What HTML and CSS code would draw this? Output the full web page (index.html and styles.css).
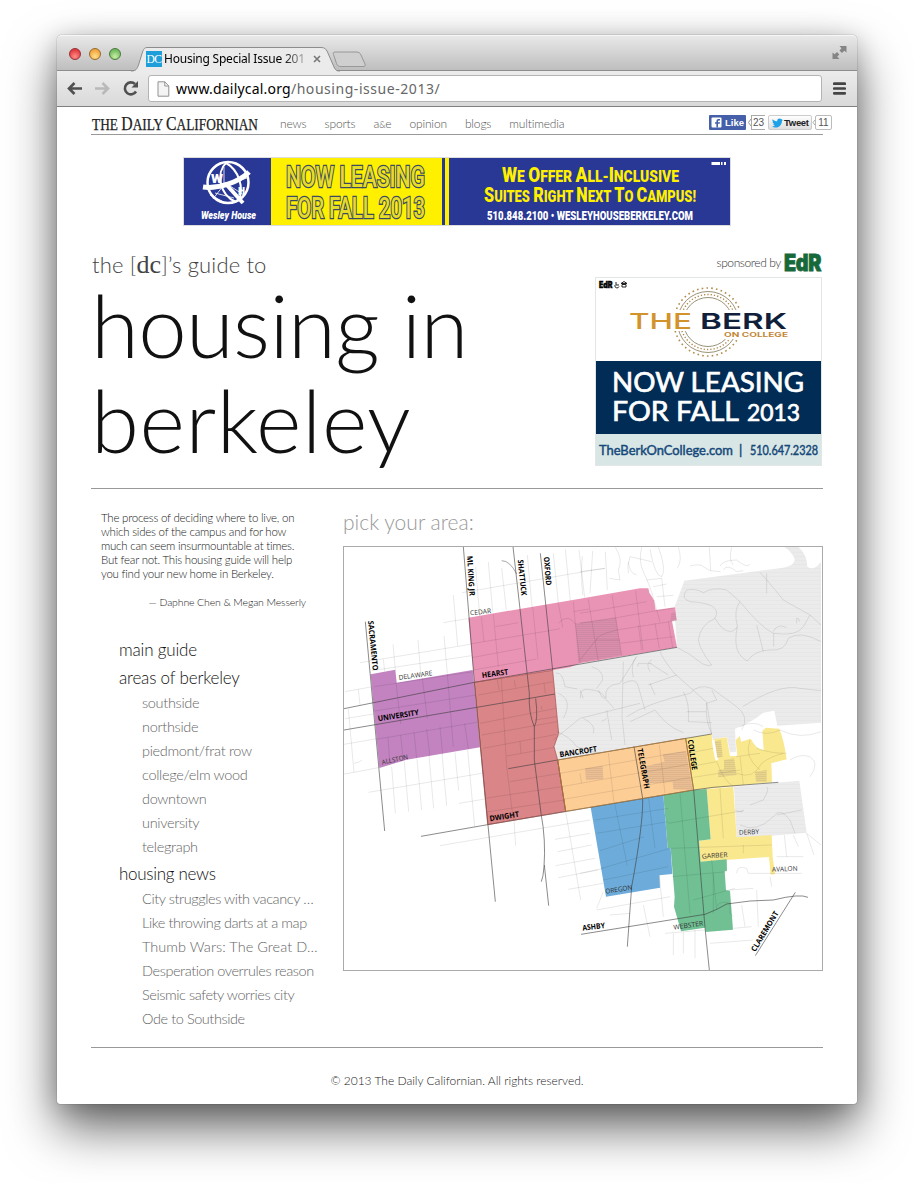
FILE: index.html
```html
<!DOCTYPE html>
<html lang="en">
<head>
<meta charset="utf-8">
<title>Housing Special Issue 2013</title>
<link rel="stylesheet" href="styles.css">
</head>
<body>
<div class="window">
  <div class="tabstrip">
    <div class="lights"><i class="light red"></i><i class="light amber"></i><i class="light green"></i></div>
    <div class="tab">
      <svg class="tab-shape" width="240" height="26" viewBox="0 0 240 26">
        <path d="M0 25.5C5 25 6 23 7.500 19L11.500 6C13 2 14 1.500 17 1.500H190C194 1.500 195 3 196.500 6L203 21C204.500 24.500 206 25.500 209 25.500V26H0Z" fill="#ebebeb"/>
        <path d="M0 25C5 25 6 23 7.500 19L11.500 6C13 2 14 1.500 17 1.500H190C194 1.500 195 3 196.500 6L203 21C204.500 24.500 206 25 209 25" fill="none" stroke="#8d8d8d"/>
        <path d="M204 6H225C228 6 229 7 230 9L234 18C234.500 20 234 20.500 232 20.500H210C207.500 20.500 206.500 20 205.500 17.500L202.500 8.500C202 7 202.300 6 204 6Z" fill="#cfcfcf" stroke="#989898"/>
      </svg>
      <span class="favicon">DC</span>
      <span class="tab-title">Housing Special Issue 201</span>
      <svg class="tab-close" width="8" height="8" viewBox="0 0 8 8"><path d="M1 1L7 7M7 1L1 7" stroke="#777" stroke-width="1.600"/></svg>
    </div>
    <svg class="expand" width="15" height="15" viewBox="0 0 15 15" fill="#858585"><path d="M7.500 1H14.500V7.500L12.300 5.800L10 8L7.500 5.500L9.500 3.200ZM.5 7.500L2.700 9.200L5 7L7.300 9.500L5.200 11.800L7.500 14H.5Z"/></svg>
  </div>
  <div class="toolbar">
    <svg width="80" height="18" viewBox="0 0 80 18" fill="none" stroke-width="2.600">
      <path d="M17 8.500H4M9.500 3L4 8.500L9.500 14" stroke="#505050"/>
      <path d="M30 8.500H43M37.500 3L43 8.500L37.500 14" stroke="#b9b9b9"/>
      <path d="M71 11.500A6 6 0 1 1 70 4" stroke="#505050"/><path d="M73 1V7.500H66.500Z" fill="#505050"/>
    </svg>
    <div class="omnibox">
      <svg width="13" height="16" viewBox="0 0 13 16"><path d="M1 .8H7.800L11.800 5V15.200H1ZM7.800 .8V5H11.800" fill="#f4f4f4" stroke="#929292"/></svg>
      <span class="url"><b>www.dailycal.org</b>/housing-issue-2013/</span>
    </div>
    <svg class="menu-icon" width="13" height="13" viewBox="0 0 13 13"><path d="M1.200 1.700H11.800M1.200 6.500H11.800M1.200 11.300H11.800" stroke="#444" stroke-width="2.700" stroke-linecap="round"/></svg>
  </div>

  <div class="page">
    <header class="site-header">
      <svg class="logo" width="168" height="20" viewBox="0 0 168 20"><text x="1" y="16.500" textLength="166" lengthAdjust="spacingAndGlyphs" font-family="Liberation Serif, serif" font-size="16.500" fill="#222" stroke="#222" stroke-width=".25">THE <tspan font-size="19.500">D</tspan>AILY <tspan font-size="19.500">C</tspan>ALIFORNIAN</text></svg>
      <nav class="nav"><a>news</a><a>sports</a><a>a<small>&amp;</small>e</a><a>opinion</a><a>blogs</a><a>multimedia</a></nav>
      <div class="social">
        <span class="like"><svg width="11" height="11" viewBox="0 0 11 11"><rect x=".5" y=".5" width="10" height="10" rx="1" fill="#fff"/><path d="M7 10.500V6.800H8.700L9 5.200H7V4.300Q7 3.500 7.900 3.500H9V2H7.400Q5.400 2 5.400 4V5.200H4V6.800H5.400V10.500Z" fill="#4560a8"/></svg>Like</span>
        <svg width="5" height="15" viewBox="0 0 5 15"><path d="M5 4L2.500 7.500L5 11" fill="none" stroke="#999"/></svg>
        <span class="count fb">23</span>
        <span class="tweet"><svg width="11" height="10" viewBox="0 0 11 10"><path d="M.6 1.200C2 2.700 3.500 3.200 5.200 3.200C5 1.300 6.200.5 7.400.5C8.300.5 8.800.9 9.200 1.300L10.500.9L9.800 2L10.900 1.900L9.900 3C9.900 7 7 9.500 4 9.500C2.500 9.500 1.200 9.200.2 8.400C1.500 8.400 2.400 8.200 3.200 7.500C2 7.300 1.500 6.700 1.200 5.900H2.100C1 5.400.5 4.600.5 3.600L1.400 3.900C.4 3.100.2 2.200.6 1.200Z" fill="#1da1e8"/></svg>Tweet</span>
        <svg width="3" height="15" viewBox="0 0 3 15"><path d="M3 5L1 7.500L3 10" fill="none" stroke="#aaa"/></svg>
        <span class="count tw">11</span>
      </div>
    </header>

    <svg class="banner" width="548" height="69" viewBox="-1 -1 548 69" font-family="Roboto, sans-serif">
      <rect x="-.5" y="-.5" width="547" height="68" fill="#293795" stroke="#ddd"/>
      <rect x="87" width="178" height="67" fill="#fff000"/>
      <rect x="258" width="3" height="67" fill="#293795"/>
      <g fill="none" stroke="#fff">
        <circle cx="44" cy="24.500" r="20.500" stroke-width="2.500"/>
        <path d="M42 5C32 14 35 37 52 44M42 5C55 12 60 30 55 42" stroke-width="2"/>
        <path d="M26 37L38 43M29 41L42 24M46 28L60 37M45 26L63 20M31 35L50 40M40 9V28" stroke-width=".8"/>
        <path d="M19 29C33 31 54 25 65 14" stroke-width="5"/>
        <path d="M41 25L59 45" stroke-width="4"/>
      </g>
      <text x="27" y="25" fill="#fff" font-weight="900" font-size="13" textLength="12" lengthAdjust="spacingAndGlyphs">W</text>
      <text x="54" y="37" fill="#fff" font-weight="900" font-size="11" textLength="7" lengthAdjust="spacingAndGlyphs">H</text>
      <text x="17" y="61" fill="#fff" font-weight="900" font-style="italic" font-size="11" textLength="55" lengthAdjust="spacingAndGlyphs">Wesley House</text>
      <g font-weight="500" fill="#e6dc28" stroke="#3a4a62" stroke-width="2.600" paint-order="stroke">
        <text x="102" y="28.500" font-size="29.500" textLength="139" lengthAdjust="spacingAndGlyphs">NOW LEASING</text>
        <text x="102" y="59.500" font-size="29.500" textLength="139" lengthAdjust="spacingAndGlyphs">FOR FALL 2013</text>
      </g>
      <g font-weight="900" fill="#fff000">
        <text x="318" y="23.500" font-size="16" textLength="177" lengthAdjust="spacingAndGlyphs"><tspan font-size="20">W</tspan>E <tspan font-size="20">O</tspan>FFER <tspan font-size="20">A</tspan>LL-<tspan font-size="20">I</tspan>NCLUSIVE</text>
        <text x="300" y="44" font-size="16" textLength="212" lengthAdjust="spacingAndGlyphs"><tspan font-size="20">S</tspan>UITES <tspan font-size="20">R</tspan>IGHT <tspan font-size="20">N</tspan>EXT <tspan font-size="20">T</tspan>O <tspan font-size="20">C</tspan>AMPUS!</text>
      </g>
      <text x="303" y="61.500" fill="#fff" font-weight="900" font-size="13.500" textLength="206" lengthAdjust="spacingAndGlyphs">510.848.2100 • WESLEYHOUSEBERKELEY.COM</text>
      <path d="M527.500 5.500H536M537 5.500H538.500M540 5.500H542" stroke="#fff" stroke-width="3"/>
    </svg>

    <section class="hero">
      <div>
        <div class="kicker">the [<span class="dc">dc</span>]’s guide to</div>
        <h1><span class="line-1">housing in</span><br><span class="line-2">berkeley</span></h1>
      </div>
      <aside>
        <div class="sponsor"><span>sponsored by</span>
          <svg width="38" height="19" viewBox="0 0 38 19"><text x="0" y="17.500" font-family="Inter, sans-serif" font-weight="900" font-size="23" textLength="37" lengthAdjust="spacingAndGlyphs" fill="#17693a" stroke="#17693a" stroke-width=".8">EdR</text></svg>
        </div>
        <svg class="berk" width="227" height="189" viewBox="0 0 227 189" font-family="Lato, sans-serif">
          <rect x=".5" y=".5" width="226" height="188" fill="#fff" stroke="#e2e6e6"/>
          <rect x="1" y="84" width="225" height="73" fill="#002c55"/>
          <rect x="1" y="157" width="225" height="31" fill="#d8e7e5"/>
          <g fill="none" stroke="#b08b4d">
            <circle cx="113" cy="45" r="34" stroke-width="1.600" stroke-dasharray="1.600 3.200"/>
            <circle cx="113" cy="45" r="30.500" stroke="#9a9278" stroke-width="1"/>
            <circle cx="113" cy="45" r="27.500" stroke-width="1.400" stroke-dasharray="1.300 2"/>
            <circle cx="113" cy="45" r="24.500" stroke="#9a9278" stroke-width="1"/>
          </g>
          <path d="M34 33H193V54H200V62H128V54H34Z" fill="#fff"/>
          <text x="34" y="51.500" font-family="Inter, sans-serif" font-weight="500" font-size="22" textLength="63" lengthAdjust="spacingAndGlyphs" fill="#d2932d">THE</text>
          <text x="105" y="51.500" font-family="Inter, sans-serif" font-weight="600" font-size="22" textLength="87" lengthAdjust="spacingAndGlyphs" fill="#10203b">BERK</text>
          <text x="129" y="60" font-family="Inter, sans-serif" font-weight="700" font-size="6.200" textLength="64" lengthAdjust="spacingAndGlyphs" fill="#c28838">ON COLLEGE</text>
          <text x="4" y="10.500" font-family="Inter, sans-serif" font-weight="900" font-size="8.500" textLength="13.500" lengthAdjust="spacingAndGlyphs" stroke="#000" stroke-width=".5">EdR</text>
          <path d="M21 5V8H24M20 8A2 2 0 1 0 24 9.500M26 6.500L29 4.500L32 6.500ZM27 7.500V10H31V7.500Z" fill="none" stroke="#222"/>
          <g fill="#fff" font-weight="400" stroke="#fff" stroke-width=".7" font-size="27">
            <text x="17" y="115" textLength="192" lengthAdjust="spacingAndGlyphs">NOW LEASING</text>
            <text x="17" y="144" textLength="127" lengthAdjust="spacingAndGlyphs">FOR FALL</text>
            <text x="152" y="144" font-size="23" textLength="53" lengthAdjust="spacingAndGlyphs">2013</text>
          </g>
          <g fill="#16477a" font-weight="400" stroke="#16477a" stroke-width=".45" font-size="13">
            <text x="4" y="178" textLength="134" lengthAdjust="spacingAndGlyphs">TheBerkOnCollege.com</text>
            <text x="144" y="178">|</text>
            <text x="155" y="178" textLength="68" lengthAdjust="spacingAndGlyphs">510.647.2328</text>
          </g>
        </svg>
      </aside>
    </section>

    <main class="main">
      <div class="side">
        <p class="intro">The process of deciding where to live, on<br>which sides of the campus and for how<br>much can seem insurmountable at times.<br>But fear not. This housing guide will help<br>you find your new home in Berkeley.</p>
        <p class="byline">— Daphne Chen &amp; Megan Messerly</p>
        <ul class="menu">
          <li>main guide</li>
          <li>areas of berkeley
            <ul><li>southside</li><li>northside</li><li>piedmont/frat row</li><li>college/elm wood</li><li>downtown</li><li>university</li><li>telegraph</li></ul></li>
          <li class="section-news">housing news
            <ul class="news"><li>City struggles with vacancy …</li><li>Like throwing darts at a map</li><li class="loose">Thumb Wars: The Great D…</li><li>Desperation overrules reason</li><li>Seismic safety worries city</li><li>Ode to Southside</li></ul></li>
        </ul>
      </div>
      <div class="picker">
        <h2>pick your area:</h2>
        <svg class="map" width="480" height="425" viewBox="9 18 1440 1275" font-family="Open Sans, Noto Sans, sans-serif">
          <defs>
            <pattern id="hatch" width="8" height="12" patternUnits="userSpaceOnUse"><rect width="8" height="12" fill="#ebebeb"/><rect width="8" height="3" fill="#e7e7e7"/></pattern>
            <pattern id="lines" width="8" height="6" patternUnits="userSpaceOnUse"><rect width="8" height="6" fill="#8a7080" opacity=".16"/><rect width="8" height="2" fill="#604a55" opacity=".12"/></pattern>
          </defs>
          <rect x="9" y="18" width="1440" height="1275" fill="#fff"/>
          <!-- campus and hills -->
          <path fill="url(#hatch)" d="M638 391L690 382L720 370L1011 322L1003 203L1033 122L1330 83Q1360 78 1364 60Q1360 38 1332 20H1375Q1402 45 1402 80Q1420 95 1443 66V548L1312 557L1303 512L1270 518Q1230 550 1185 566L1188 635L1170 637L1160 590L1118 600L1115 582L1037 595L653 660L642 620L656 580Z"/>
          <path fill="url(#hatch)" d="M1182 740L1378 722L1400 878L1295 887L1190 892Z"/>
          <!-- neighbourhoods -->
          <path fill="#c283c0" d="M92 403L166 389L170 428L398 390L420 622L200 659L118 684Z"/>
          <path fill="#ea94b5" d="M385 233L720 176L900 145H925L928 158L942 180L947 210L1005 202L1010 240L996 243L1011 322L720 370L690 382L638 391L403 427Z"/>
          <path fill="#da8588" d="M403 427L638 391L656 580L642 620L653 660L677 814L443 854Z"/>
          <path fill="#fdcd96" d="M653 660L1037 595L1061 750L677 814Z"/>
          <path fill="#fae88e" d="M1037 595L1115 582Q1118 640 1128 663L1136 657Q1130 655 1120 598L1160 592L1170 648L1192 648L1187 600L1200 588L1203 605L1232 596Q1248 628 1271 630L1267 572L1278 563L1318 566Q1332 600 1340 658L1294 670L1296 727L1061 750Z"/>
          <path fill="#fae88e" d="M1100 747L1180 741L1190 892L1295 885L1298 950L1305 1002L1292 1004L1287 951L1082 965L1077 902L1112 898Z"/>
          <path fill="#70c094" d="M970 765L1061 750L1100 747L1112 898L1077 902L1082 965L1160 958L1161 992L1154 994L1158 1051L1170 1052L1179 1169L1097 1176L1095 1163L1023 1174L1002 1100L1004 1070L992 925L983 924Z"/>
          <path fill="#6dacda" d="M752 802L970 765L983 924L992 925L997 1002L958 1006L960 1043L798 1070Z"/>
          <!-- shaded blocks -->
          <path fill="url(#lines)" d="M705 250L828 233L845 346L715 368ZM990 247L1010 243 1006 217 994 219ZM735 685L788 678L790 717L738 721ZM968 643L1038 634L1058 750L1000 748L998 726L916 730L912 680L974 665ZM1120 604L1143 601L1148 650L1126 655ZM1135 690L1152 688V660L1182 655L1190 705L1135 712ZM1245 695L1280 690V725H1248Z"/>
          <!-- minor streets -->
          <g fill="none" stroke="#000" stroke-opacity=".14" stroke-width="2">
            <path d="M310 248L382 236M340 165L353 318M366 158L750 92L795 85M407 80L419 228M445 66L458 215M485 84L499 210M562 45L576 200M640 40L655 190M676 28L691 183M717 30L734 173M60 368L390 313M130 358L134 394M159 313L166 389M234 300L243 414M312 288L322 400M95 392L395 347"/>
            <path d="M15 455L92 441M55 448L60 495M15 536L100 522M12 613L110 596M25 507L42 697L12 702M42 697L115 683M42 670Q60 668 66 660M85 757L425 700M155 680L166 820M193 665L206 815M231 657L245 810M267 648L281 805M306 642L320 797M345 637L356 752M383 630L404 860M357 790L435 777M300 917L750 840M522 842L527 917"/>
            <path d="M102 440L400 395M104 513L408 465M108 598L415 546M168 428L182 552M247 415L262 535M322 402L340 620M144 592L150 674M182 585L190 662M222 577L230 655M260 567L270 650M300 560L308 644M374 550L385 628"/>
            <path d="M390 312L640 270L660 266M466 260L535 248M395 353L545 325M400 390L590 357M424 230L432 305M460 222L475 380M578 200L594 358M655 190L668 262M700 185L706 250L720 370M656 250Q665 235 685 235Q700 240 705 252M700 215L748 207"/>
            <path d="M415 465L640 425M420 550L648 505M425 585L652 545M430 625L650 583M435 775L665 740M440 816L672 780M472 420L478 450M484 415L500 680L520 840M523 420L526 442M612 430L616 460M585 540L650 530M540 604L543 640M500 648L645 622M510 725L660 700M604 498L606 510"/>
            <path d="M745 178L775 365M816 165L845 346M887 153L909 330M942 180L950 210M720 250L830 233L950 212L1000 205M830 270L990 245M840 310L1000 290M720 220L920 185M950 210L960 245M895 255L905 330M945 250L958 325M985 245L998 322M720 360L768 300M768 300L840 300M768 300Q770 285 830 270"/>
            <path d="M727 48Q722 100 728 165M758 33L750 160M796 35L802 150M720 95L795 85M826 22Q850 60 835 90L840 120L808 115M865 65Q868 100 890 105M935 65L870 50Q860 75 865 100M905 22Q895 65 910 95Q935 150 940 175M930 28Q945 110 965 110Q980 90 955 20M1015 22Q1028 60 1012 85M920 120L965 115L975 200M940 140L980 132M950 170L1000 166M1050 78Q1080 70 1090 80L1110 92L1142 95M1108 22L1112 92M1175 22Q1165 60 1180 75M1140 78Q1150 60 1190 60Q1220 85 1230 73M1150 90Q1160 70 1190 95L1210 92"/>
            <path d="M1050 185Q1020 175 1040 150Q1070 145 1090 158Q1120 140 1160 150L1200 185Q1260 260 1300 280Q1370 290 1390 260L1410 225M1200 185Q1180 210 1192 260Q1180 280 1160 272Q1145 268 1125 235Q1080 255 1075 300Q1080 330 1115 375Q1105 380 1085 370Q1050 340 1011 322M1050 185Q1150 190 1125 235M1192 260Q1175 340 1222 363Q1245 330 1290 330Q1335 335 1345 295Q1380 270 1443 305M1250 255L1270 335M1260 97Q1290 130 1330 180L1410 225L1443 255M1280 100V160M1301 280V320M1300 275Q1310 250 1340 262M1370 250V235Q1380 235 1378 245M1208 500Q1320 430 1380 445L1443 452"/>
            <path d="M648 400Q668 395 675 440L712 447M720 450L730 475M722 475Q715 440 755 450Q780 450 798 475Q790 435 840 430L890 350M755 380Q790 390 788 420L770 445M775 450L785 470Q795 475 800 480L822 505M850 365L846 530L855 615M890 350Q870 370 880 412M850 430Q890 410 895 440L915 510M893 380L895 370H935M935 360Q915 370 930 395M930 370L985 405M925 435L1010 405M930 430L945 465M960 335Q970 360 1003 400L1100 487L1115 582M860 530Q920 490 1050 460Q1075 430 1115 445L1190 500Q1230 530 1205 570M870 545L945 510Q980 560 1030 578M800 510L815 600M720 535L900 490M1030 455Q1050 490 1045 545L1115 548M1040 515H1098M650 575Q690 590 710 620L775 640M655 460Q700 480 670 535M730 535Q770 555 760 580M785 545L800 535M640 600L720 535M1115 582Q1095 540 1100 490L1130 480L1115 450"/>
            <path d="M660 700L1048 632M665 740L1050 672M670 778L1055 712M720 700L725 730M805 638L822 790M958 615L975 760M1040 640L1120 625M1050 680L1130 665M1060 712L1200 690M1130 665Q1150 720 1180 740M1200 650L1210 735M1188 650L1260 640M1190 700Q1240 720 1265 670Q1290 650 1330 640M1230 600Q1210 650 1260 690M1250 625Q1290 640 1340 640M1200 560Q1240 540 1270 560M1240 570Q1280 590 1320 570Q1380 600 1443 575M1350 660Q1380 640 1410 650Q1440 670 1410 710"/>
            <path d="M765 840L985 805M770 880L985 845M780 932L912 890M785 985L990 925M790 1020L985 980M824 790L862 977M925 770L945 925M645 898L750 880M653 935L755 915M647 977L765 955M655 1013L775 990M685 1048L790 1030M677 814L722 1080M720 1000L790 985M1020 760L1050 1120M1140 745L1150 895M985 850L1210 812M992 925L1295 915M1060 1080L1185 1045M1120 1000V1120M995 1010L1160 995M1115 960L1130 1110M1130 1100Q1140 1080 1170 1090V1120L1180 1130M1210 915V940"/>
            <path d="M790 1055L770 1105M770 1110L990 1070M810 1125L870 1120M910 1095L930 1190M958 1006L970 1130M975 1180L1095 1170M1000 1180V1245M1030 1175V1240M1065 1170V1255M1110 1210L1240 1200M1180 1165L1235 1160M1205 1095L1215 1160M1250 1050L1255 1160M1170 1050L1240 1045M1190 1000Q1190 975 1220 985L1225 1000H1385M1310 950L1390 950M1290 1010L1295 1040M1333 885L1340 950M1360 885L1375 920M1400 880L1422 945M1400 880L1443 915M1185 810Q1205 820 1212 810M1230 795L1270 780Q1290 745 1280 740M1200 855Q1250 880 1300 830Q1320 800 1350 840L1365 880M1310 825L1385 810"/>
          </g>
          <!-- major streets -->
          <g fill="none" stroke="#3d3d3d" stroke-width="2.400" stroke-opacity=".75">
            <path d="M76 245L134 873M370 20L403 427L466 1085M519 20L540 207L568 460Q565 520 583 560V660L603 820Q618 900 612 980Q610 1010 604 1025M613 975L626 1097M601 40L638 391M403 427L1011 322M12 506L403 427M12 570L645 462M243 889L443 854L1061 750L1120 742L1315 727M587 475Q595 540 583 560M505 686L653 660L1115 582M653 660L677 814M882 620L908 775Q910 850 875 1040L862 1220M1037 595L1061 750L1095 1163L1108 1290M723 1183L1095 1123Q1130 1110 1160 1092Q1230 1080 1300 1080Q1380 1060 1404 1072M1366 1057L1246 1247"/>
            <path d="M485 62Q510 62 530 102" stroke-width="1.800"/>
          </g>
          <path d="M403 427L638 391L656 580L642 620L653 660L677 814L443 854Z" fill="none" stroke="#a04d45" stroke-width="2"/>
          <path d="M653 660L1037 595L1061 750L677 814Z" fill="none" stroke="#b5782f" stroke-width="2"/>
          <path d="M1120 600Q1128 640 1128 658" fill="none" stroke="#fff" stroke-width="6"/>
          <!-- street names -->
          <g font-weight="700" font-size="23" fill="#000">
            <text transform="translate(84 243) rotate(84.500)" textLength="150" lengthAdjust="spacingAndGlyphs">SACRAMENTO</text>
            <text transform="translate(381 48) rotate(86.500)" textLength="120" lengthAdjust="spacingAndGlyphs">ML KING JR</text>
            <text transform="translate(533 60) rotate(84)" textLength="108" lengthAdjust="spacingAndGlyphs">SHATTUCK</text>
            <text transform="translate(611 51) rotate(85)" textLength="86" lengthAdjust="spacingAndGlyphs">OXFORD</text>
            <text transform="translate(427 414) rotate(-8)" textLength="79" lengthAdjust="spacingAndGlyphs">HEARST</text>
            <text transform="translate(115 544) rotate(-9)" textLength="124" lengthAdjust="spacingAndGlyphs">UNIVERSITY</text>
            <text transform="translate(660 652) rotate(-9)" textLength="113" lengthAdjust="spacingAndGlyphs">BANCROFT</text>
            <text transform="translate(450 844) rotate(-9)" textLength="89" lengthAdjust="spacingAndGlyphs">DWIGHT</text>
            <text transform="translate(892 627) rotate(80)" textLength="122" lengthAdjust="spacingAndGlyphs">TELEGRAPH</text>
            <text transform="translate(1043 600) rotate(82)" textLength="92" lengthAdjust="spacingAndGlyphs">COLLEGE</text>
            <text transform="translate(728 1172) rotate(-7)" textLength="68" lengthAdjust="spacingAndGlyphs">ASHBY</text>
            <text transform="translate(1246 1237) rotate(-59)" textLength="137" lengthAdjust="spacingAndGlyphs">CLAREMONT</text>
          </g>
          <g font-size="20" font-weight="400" fill="#333">
            <text transform="translate(391 226) rotate(-6)" textLength="63" lengthAdjust="spacingAndGlyphs">CEDAR</text>
            <text transform="translate(177 420) rotate(-8)" textLength="102" lengthAdjust="spacingAndGlyphs">DELAWARE</text>
            <text transform="translate(127 674) rotate(-12)" textLength="80" lengthAdjust="spacingAndGlyphs">ALLSTON</text>
            <text transform="translate(797 1061) rotate(-9)" textLength="82" lengthAdjust="spacingAndGlyphs">OREGON</text>
            <text transform="translate(1001 1169) rotate(-8)" textLength="90" lengthAdjust="spacingAndGlyphs">WEBSTER</text>
            <text transform="translate(1086 956) rotate(-4)" textLength="77" lengthAdjust="spacingAndGlyphs">GARBER</text>
            <text transform="translate(1197 884) rotate(-2)" textLength="60" lengthAdjust="spacingAndGlyphs">DERBY</text>
            <text transform="translate(1296 995) rotate(-2)" textLength="77" lengthAdjust="spacingAndGlyphs">AVALON</text>
          </g>
          <rect x="10.500" y="19.500" width="1437" height="1272" fill="none" stroke="#aaa" stroke-width="3"/>
        </svg>
      </div>
    </main>
    <footer>© 2013 The Daily Californian. All rights reserved.</footer>
  </div>
</div>
</body>
</html>
```
FILE: styles.css
```css
* { box-sizing: border-box; }
body { margin: 0; height: 1183px; overflow: hidden; background: #fff; font-family: Lato, "Liberation Sans", sans-serif; font-weight: 300; }
ul, h1, h2, p { margin: 0; padding: 0; list-style: none; font-weight: 300; }
svg { display: block; flex: none; }

.window { width: 800px; height: 1069px; margin: 35px 0 0 57px; background: #fff; border-radius: 5px 5px 3px 3px; box-shadow: 0 0 1px rgba(0,0,0,.7), 0 24px 50px rgba(0,0,0,.6), 0 4px 24px rgba(0,0,0,.2); }

/* browser chrome */
.tabstrip { display: flex; height: 36px; padding: 0 10px 0 12px; border-radius: 5px 5px 0 0; background: linear-gradient(#e8e8e8, #bebebe); border-top: 1px solid #f6f6f6; border-bottom: 1px solid #8d8d8d; }
.lights { display: flex; gap: 8px; padding-top: 12px; width: 62px; }
.light { width: 12px; height: 12px; border-radius: 50%; border: 1px solid #777; }
.red { background: radial-gradient(circle at 50% 75%, #ff8f88, #e1373c 75%); border-color: #983035; }
.amber { background: radial-gradient(circle at 50% 75%, #ffe08a, #f0a23c 75%); border-color: #98692a; }
.green { background: radial-gradient(circle at 50% 75%, #c7f0a4, #6fb75c 75%); border-color: #4a7a3d; }
.tab { position: relative; display: flex; align-items: center; width: 240px; height: 26px; margin-top: 10px; padding-left: 15px; }
.tab-shape { position: absolute; left: 0; top: 0; }
.favicon { position: relative; width: 16px; height: 16px; background: #1f9fd9; color: #fff; font: 11.5px/16px "Liberation Serif", serif; text-align: center; letter-spacing: -.5px; }
.tab-title { position: relative; width: 144px; margin-left: 2px; white-space: nowrap; font: 400 12px/16px "Noto Sans", sans-serif; letter-spacing: -.22px; color: transparent; background: linear-gradient(90deg, #000 82%, rgba(0,0,0,.15)); -webkit-background-clip: text; background-clip: text; }
.tab-close { position: relative; margin-left: 5px; }
.expand { margin: 9px 0 0 auto; }
.toolbar { display: flex; align-items: center; height: 36px; padding: 0 11px 0 8px; background: linear-gradient(#ececec, #d9d9d9); border-bottom: 1px solid #808080; }
.omnibox { display: flex; align-items: center; width: 674px; height: 27px; margin-left: 3px; padding-left: 8px; background: #fff; border: 1px solid #b4b4b4; border-radius: 3px; }
.url { margin-left: 6px; font: 400 14px/24px "Noto Sans", sans-serif; color: #666; letter-spacing: .55px; }
.url b { font-weight: 400; color: #000; letter-spacing: .2px; }
.menu-icon { margin-left: auto; }

/* page */
.page { padding: 0 34px; }
.site-header { display: flex; height: 28px; border-bottom: 1px solid #999; }
.logo { margin-top: 6px; }
.nav { display: flex; gap: 18px; margin-left: 21px; padding-top: 6px; font-size: 12px; line-height: 22px; color: #555; letter-spacing: -.15px; }
.nav small { font-size: 9px; }
.social { display: flex; align-items: center; height: 15px; margin: 8px -9px 0 auto; font-family: "Liberation Sans", sans-serif; font-weight: 400; font-size: 10px; }
.like { display: flex; align-items: center; gap: 3px; width: 37px; height: 15px; padding-left: 2px; background: #4560a8; color: #fff; font-weight: 700; font-size: 9.5px; border-radius: 1px; }
.count { height: 15px; line-height: 13px; border: 1px solid #aaa; color: #555; text-align: center; }
.fb { width: 14px; border-right: 0; }
.tweet { display: flex; align-items: center; gap: 1px; width: 44px; height: 15px; margin-left: 3px; padding-left: 3px; border: 1px solid #ccc; border-radius: 2px; background: linear-gradient(#fff, #dedede); color: #222; font-weight: 700; font-size: 9.5px; letter-spacing: -.3px; }
.tw { width: 17px; border-color: #bbb; border-radius: 2px; }
.banner { margin: 22px auto -1px; }

.hero { display: flex; justify-content: space-between; height: 264px; padding-right: 1px; border-bottom: 1px solid #999; }
.kicker { padding: 26px 0 0 1px; font-size: 22px; line-height: 28px; color: #444; letter-spacing: .15px; }
.dc { font-family: "Liberation Serif", serif; font-weight: 400; font-size: 26px; line-height: 20px; }
h1 { margin: -2px 0 0 0; font-size: 87px; line-height: 95px; color: #111; white-space: nowrap; }
.line-1 { letter-spacing: -.7px; }
.line-2 { letter-spacing: .6px; }
aside { padding-top: 27px; }
.sponsor { display: flex; align-items: center; justify-content: flex-end; gap: 3px; height: 20px; margin-bottom: 5px; font-size: 12px; color: #333; letter-spacing: -.4px; }

.main { display: flex; height: 559px; border-bottom: 1px solid #999; }
.side { width: 252px; padding: 22px 0 0 10px; }
.intro { font-size: 11.5px; line-height: 14px; color: #222; letter-spacing: -.23px; white-space: nowrap; }
.byline { width: 205px; margin-top: 14px; font-size: 10.5px; line-height: 14px; color: #222; text-align: right; white-space: nowrap; letter-spacing: -.13px; }
.menu { margin: 27px 0 0 18px; font-size: 17px; line-height: 28px; color: #111; white-space: nowrap; letter-spacing: -.18px; }
.menu ul { margin: -1px 0 0 23px; font-size: 14.5px; line-height: 24px; color: #666; letter-spacing: -.32px; }
.menu .section-news { margin-top: 1px; letter-spacing: -.3px; }
.menu .news { letter-spacing: -.42px; }
.menu .loose { letter-spacing: .05px; }
.picker { width: 480px; padding-top: 19px; }
h2 { margin-bottom: 10px; font-size: 21px; line-height: 28px; color: #999; }
footer { padding-top: 5px; line-height: 56px; font-size: 12px; color: #222; text-align: center; }
```
